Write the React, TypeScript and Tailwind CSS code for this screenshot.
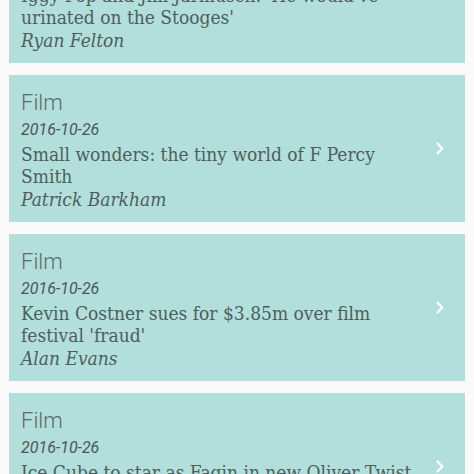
import React from "react";

type Item = { cat: string; date: string; title: string; author: string };

const items: Item[] = [
  {
    cat: "Film",
    date: "2016-10-26",
    title: "Iggy Pop and Jim Jarmusch: 'He would've urinated on the Stooges'",
    author: "Ryan Felton",
  },
  {
    cat: "Film",
    date: "2016-10-26",
    title: "Small wonders: the tiny world of F Percy Smith",
    author: "Patrick Barkham",
  },
  {
    cat: "Film",
    date: "2016-10-26",
    title: "Kevin Costner sues for $3.85m over film festival 'fraud'",
    author: "Alan Evans",
  },
  {
    cat: "Film",
    date: "2016-10-26",
    title: "Ice Cube to star as Fagin in new Oliver Twist film",
    author: "Catherine Shoard",
  },
];

function Chevron() {
  return (
    <svg width="8" height="13" viewBox="0 0 8 13" fill="none">
      <path d="M1.5 1.5 L6.2 6.5 L1.5 11.5" stroke="#ffffff" strokeWidth="2.2" strokeLinecap="round" strokeLinejoin="round" />
    </svg>
  );
}

function Card({ item }: { item: Item }) {
  return (
    <div className="flex bg-[#b2dfdb] pl-[12px]">
      <div className="flex-1 pt-[15px] pb-[12px]">
        <div className="font-['Roboto',sans-serif] font-light text-[22px] leading-[26px] text-[#5e6b69]">
          {item.cat}
        </div>
        <div className="mt-[2px] font-['Roboto',sans-serif] italic text-[16px] leading-[24px] text-[#4b5755]">
          {item.date}
        </div>
        <div className="mt-[1px] font-['DejaVu_Serif_Condensed','DejaVu_Serif',serif] text-[19px] leading-[22px] text-[#4d5e5c]">
          {item.title}
        </div>
        <div className="mt-[1px] font-['DejaVu_Serif_Condensed','DejaVu_Serif',serif] italic text-[19px] leading-[22px] text-[#4d5e5c]">
          {item.author}
        </div>
      </div>
      <div className="mr-[12px] flex w-[26px] items-center justify-center">
        <Chevron />
      </div>
    </div>
  );
}

export default function App() {
  return (
    <div className="h-[474px] w-[474px] overflow-hidden bg-[#fafafa]">
      <div className="-mt-[84px] flex flex-col gap-[12px] px-[9px]">
        {items.map((it, i) => (
          <Card key={i} item={it} />
        ))}
      </div>
    </div>
  );
}
